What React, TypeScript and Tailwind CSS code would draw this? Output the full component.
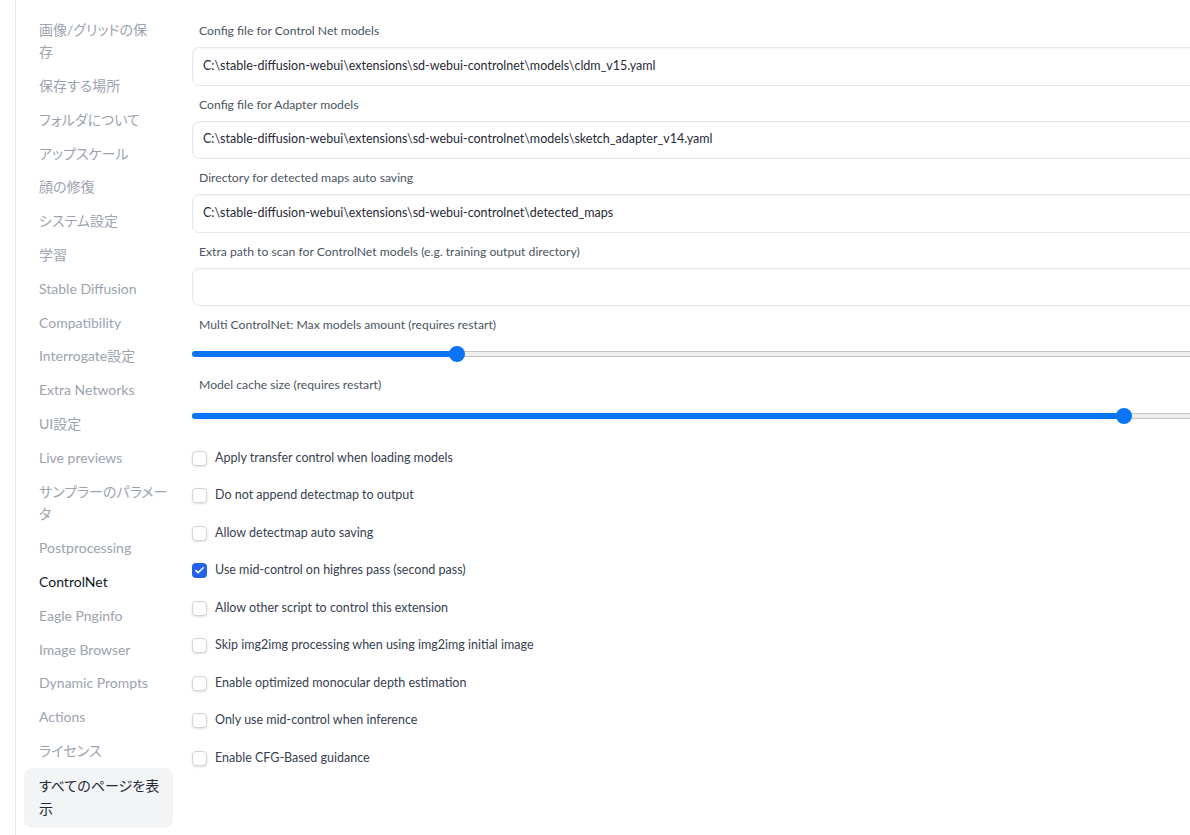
import { Check } from "lucide-react";

const navItems: { label: React.ReactNode; active?: boolean }[] = [
  { label: <>画像/グリッドの保<br />存</> },
  { label: "保存する場所" },
  { label: "フォルダについて" },
  { label: "アップスケール" },
  { label: "顔の修復" },
  { label: "システム設定" },
  { label: "学習" },
  { label: "Stable Diffusion" },
  { label: "Compatibility" },
  { label: "Interrogate設定" },
  { label: "Extra Networks" },
  { label: "UI設定" },
  { label: "Live previews" },
  { label: <>サンプラーのパラメー<br />タ</> },
  { label: "Postprocessing" },
  { label: "ControlNet", active: true },
  { label: "Eagle Pnginfo" },
  { label: "Image Browser" },
  { label: "Dynamic Prompts" },
  { label: "Actions" },
  { label: "ライセンス" },
];

const textFields = [
  {
    label: "Config file for Control Net models",
    value: "C:\\stable-diffusion-webui\\extensions\\sd-webui-controlnet\\models\\cldm_v15.yaml",
  },
  {
    label: "Config file for Adapter models",
    value: "C:\\stable-diffusion-webui\\extensions\\sd-webui-controlnet\\models\\sketch_adapter_v14.yaml",
  },
  {
    label: "Directory for detected maps auto saving",
    value: "C:\\stable-diffusion-webui\\extensions\\sd-webui-controlnet\\detected_maps",
  },
  {
    label: "Extra path to scan for ControlNet models (e.g. training output directory)",
    value: "",
  },
];

const checks = [
  { label: "Apply transfer control when loading models", on: false },
  { label: "Do not append detectmap to output", on: false },
  { label: "Allow detectmap auto saving", on: false },
  { label: "Use mid-control on highres pass (second pass)", on: true },
  { label: "Allow other script to control this extension", on: false },
  { label: "Skip img2img processing when using img2img initial image", on: false },
  { label: "Enable optimized monocular depth estimation", on: false },
  { label: "Only use mid-control when inference", on: false },
  { label: "Enable CFG-Based guidance", on: false },
];

function Slider({ pos }: { pos: number }) {
  return (
    <div className="relative h-[16px] w-full">
      {/* track */}
      <div className="absolute left-0 right-0 top-[5px] h-[6px] rounded-full border border-[#c4c4c4] bg-[#efefef]" />
      <div
        className="absolute left-0 top-[5px] h-[6px] rounded-full bg-[#0a74f5]"
        style={{ width: pos }}
      />
      <div
        className="absolute top-0 h-[16px] w-[16px] rounded-full bg-[#0a74f5]"
        style={{ left: pos - 8 }}
      />
    </div>
  );
}

export default function App() {
  return (
    <div
      className="flex h-[835px] w-[1190px] overflow-hidden bg-white"
      style={{ fontFamily: '"Lato", "Noto Sans CJK JP", sans-serif' }}
    >
      {/* Sidebar */}

      <div className="ml-[15px] flex w-[158px] shrink-0 flex-col border-l border-[#e5e7eb] pl-[8px] pt-[13px] [font-feature-settings:'palt']">
        {navItems.map((item, i) => (
          <div
            key={i}
            className={
              "whitespace-nowrap px-[15px] py-[5.5px] text-[14px] leading-[22.8px] " +
              (item.active ? "text-[#111827]" : "text-[#9ca3af]")
            }
          >
            {item.label}
          </div>
        ))}

        <div className="whitespace-nowrap rounded-lg bg-[#f3f4f6] px-[15px] py-[7px] text-[14px] leading-[22.8px] text-[#1f2937]">
          すべてのページを表
          <br />
          示
        </div>
      </div>

      {/* Main */}

      <div className="ml-[19px] flex w-[1040px] shrink-0 flex-col pt-[22px]">
        {textFields.map((f) => (
          <div key={f.label} className="mb-[10px]">
            <div className="px-[7px] text-[12.2px] leading-[18px] text-[#4b5563]">
              {f.label}
            </div>
            <div className="mt-[7px] flex h-[38.5px] items-center rounded-[7px] border border-[#e5e7eb] bg-white px-[10px] text-[12.5px] text-[#1f2937] shadow-[inset_0_1px_2px_rgba(0,0,0,0.04)]">
              {f.value}
            </div>
          </div>
        ))}

        {/* Sliders */}

        <div className="h-[60px]">
          <div className="px-[7px] text-[12.2px] leading-[18px] text-[#4b5563]">
            Multi ControlNet: Max models amount (requires restart)
          </div>
          <div className="mt-[12px]">
            <Slider pos={265} />
          </div>
        </div>

        <div className="h-[60px]">
          <div className="px-[7px] text-[12.2px] leading-[18px] text-[#4b5563]">
            Model cache size (requires restart)
          </div>
          <div className="mt-[14px]">
            <Slider pos={932} />
          </div>
        </div>

        {/* Checkboxes */}

        <div className="mt-[3.5px] flex flex-col">
          {checks.map((c) => (
            <div key={c.label} className="flex h-[37.5px] items-center gap-[8px]">
              {c.on ? (
                <div className="flex h-[15px] w-[15px] items-center justify-center rounded-[4px] bg-[#2563eb] text-white">
                  <Check size={11} strokeWidth={3.5} />
                </div>
              ) : (
                <div className="h-[15px] w-[15px] rounded-[4px] border border-[#d1d5db] bg-white shadow-sm" />
              )}
              <span className="text-[12.5px] text-[#374151]">{c.label}</span>
            </div>
          ))}
        </div>
      </div>
    </div>
  );
}
